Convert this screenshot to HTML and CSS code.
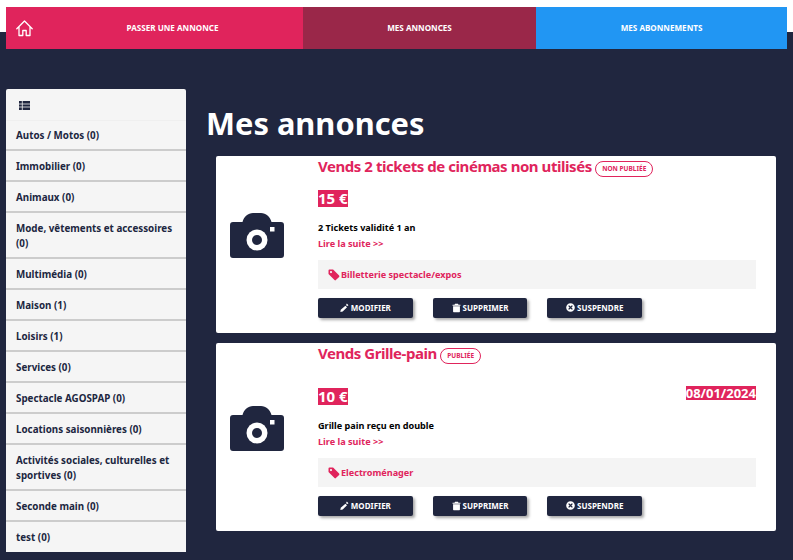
FILE: index.html
```html
<!DOCTYPE html>
<html lang="fr">
<head>
<meta charset="utf-8">
<title>Mes annonces</title>
<link rel="stylesheet" href="styles.css">
</head>
<body>
<svg class="defs" width="0" height="0" aria-hidden="true">
  <symbol id="i-tag" viewBox="0 0 12 12"><path d="M0.5 1.5a1 1 0 0 1 1-1h3.6l6 6a1 1 0 0 1 0 1.4l-3.2 3.2a1 1 0 0 1-1.4 0l-6-6zM3 2a1 1 0 1 0 0 2.2A1 1 0 0 0 3 2z" fill="currentColor" fill-rule="evenodd"/></symbol>
  <symbol id="i-pen" viewBox="0 0 10 10"><path d="M7.6 0.6l1.8 1.8-1 1-1.8-1zM6 3l1.8 1.8-4.8 4.7-2.6 0.4 0.4-2.4z" fill="currentColor"/></symbol>
  <symbol id="i-trash" viewBox="0 0 10 10"><path d="M3.4 0.4h3.2l0.6 1.1H9.4v1H0.6v-1h2.2zM1.2 3h7.6v6a0.7 0.7 0 0 1-0.7 0.7H1.9A0.7 0.7 0 0 1 1.2 9z" fill="currentColor"/></symbol>
  <symbol id="i-ban" viewBox="0 0 10 10"><path d="M5 0.2a4.8 4.8 0 1 1 0 9.6a4.8 4.8 0 0 1 0-9.6zM3.4 2.4L2.4 3.4 4 5 2.4 6.6l1 1L5 6l1.6 1.6 1-1L6 5l1.6-1.6-1-1L5 4z" fill="currentColor" fill-rule="evenodd"/></symbol>
  <symbol id="i-camera" viewBox="0 0 54 45"><path d="M3 9h9.5C14 3.500 18 0 23 0h8c5 0 9 3.500 10.500 9H51a3 3 0 0 1 3 3v30a3 3 0 0 1-3 3H3a3 3 0 0 1-3-3V12a3 3 0 0 1 3-3z" fill="currentColor"/><circle cx="27" cy="27" r="10.500" fill="#fff"/><circle cx="27" cy="27" r="5" fill="currentColor"/><rect x="40" y="14" width="4.500" height="4.500" fill="#fff"/></symbol>
</svg>

<header class="top">
  <nav class="tabs">
    <a class="tab tab-pink">
      <svg class="home" viewBox="0 0 17 17" width="17" height="17"><path d="M0.8 8.700L8.500 1l7.700 7.700M3 7v8.500h3.800v-5h3.400v5H14V7" fill="none" stroke="#fff" stroke-width="1.300" stroke-linejoin="round" stroke-linecap="round"/></svg>
      PASSER UNE ANNONCE
    </a>
    <a class="tab tab-rose">MES ANNONCES</a>
    <a class="tab tab-blue">MES ABONNEMENTS</a>
  </nav>
</header>

<div class="layout">
  <aside class="side">
    <div class="side-head">
      <svg viewBox="0 0 11 9" width="11" height="9"><path d="M0 0h11v9H0z" fill="#20263f"/><path d="M3.300 0v9M0 3h11M0 6h11" stroke="#f5f5f5" stroke-width="0.800"/></svg>
    </div>
    <ul class="cats">
      <li>Autos / Motos (0)</li>
      <li>Immobilier (0)</li>
      <li>Animaux (0)</li>
      <li>Mode, vêtements et accessoires (0)</li>
      <li>Multimédia (0)</li>
      <li>Maison (1)</li>
      <li>Loisirs (1)</li>
      <li>Services (0)</li>
      <li>Spectacle AGOSPAP (0)</li>
      <li>Locations saisonnières (0)</li>
      <li>Activités sociales, culturelles et sportives (0)</li>
      <li>Seconde main (0)</li>
      <li>test (0)</li>
    </ul>
  </aside>

  <main class="content">
    <h1 class="title">Mes annonces</h1>

    <article class="card">
      <div class="pic"><svg class="camera" width="54" height="45"><use href="#i-camera"/></svg></div>
      <div class="info">
        <h2 class="name">Vends 2 tickets de cinémas non utilisés <span class="state">NON PUBLIÉE</span></h2>
        <div class="row row-one"><span class="price">15 €</span></div>
        <p class="desc">2 Tickets validité 1 an</p>
        <a class="more">Lire la suite &gt;&gt;</a>
        <div class="cat"><svg width="12" height="12"><use href="#i-tag"/></svg>Billetterie spectacle/expos</div>
        <div class="btns">
          <a class="btn"><svg width="9" height="9"><use href="#i-pen"/></svg>MODIFIER</a>
          <a class="btn"><svg width="9" height="10"><use href="#i-trash"/></svg>SUPPRIMER</a>
          <a class="btn"><svg width="9" height="9"><use href="#i-ban"/></svg>SUSPENDRE</a>
        </div>
      </div>
    </article>

    <article class="card">
      <div class="pic"><svg class="camera" width="54" height="45"><use href="#i-camera"/></svg></div>
      <div class="info">
        <h2 class="name">Vends Grille-pain <span class="state">PUBLIÉE</span></h2>
        <div class="row row-two"><span class="price">10 €</span><span class="date">08/01/2024</span></div>
        <p class="desc">Grille pain reçu en double</p>
        <a class="more">Lire la suite &gt;&gt;</a>
        <div class="cat"><svg width="12" height="12"><use href="#i-tag"/></svg>Electroménager</div>
        <div class="btns">
          <a class="btn"><svg width="9" height="9"><use href="#i-pen"/></svg>MODIFIER</a>
          <a class="btn"><svg width="9" height="10"><use href="#i-trash"/></svg>SUPPRIMER</a>
          <a class="btn"><svg width="9" height="9"><use href="#i-ban"/></svg>SUSPENDRE</a>
        </div>
      </div>
    </article>
  </main>
</div>
</body>
</html>
```

FILE: styles.css
```css
* { box-sizing: border-box; }
html, body { margin: 0; height: 560px; overflow: hidden; }
body {
  background: #20263f;
  font-family: "Noto Sans", "Open Sans", sans-serif;
  font-weight: 700;
  color: #20263f;
}
.defs { position: absolute; }

.top {
  padding: 7px 6px 0;
  background: linear-gradient(#fff 32px, #20263f 32px);
}
.tabs { display: flex; height: 42px; }
.tab {
  position: relative;
  display: flex;
  align-items: center;
  justify-content: center;
  padding-bottom: 2px;
  color: #fff;
  font-size: 8.100px;
}
.tab-pink { width: 297px; padding-left: 36px; background: #e0245c; }
.tab-rose { width: 233px; background: #9a2749; }
.tab-blue { width: 251px; background: #2196f3; }
.home { position: absolute; left: 10px; top: 13px; }

.layout {
  display: flex;
  padding: 40px 0 0 6px;
}
.side {
  width: 180px;
  height: 463px;
  background: #f5f5f5;
  border-radius: 2px 2px 0 0;
  flex: none;
}
.side-head {
  height: 32px;
  padding: 12px 0 0 13px;
  border-bottom: 1px solid #efefef;
  line-height: 0;
}
.cats { list-style: none; margin: 0; padding: 0; }
.cats li {
  padding: 8px 10px 6px;
  font-size: 9.800px;
  line-height: 15px;
  border-bottom: 2px solid #ccc;
}
.cats li:first-child { padding-top: 7px; }
.cats li:last-child { border-bottom: 0; }

.content { padding: 0 0 0 20px; flex: 1; }
.title {
  margin: 14px 0 13px;
  color: #fff;
  font-size: 30.800px;
  line-height: 40px;
  font-weight: 700;
}
.card {
  display: flex;
  width: 560px;
  margin: 0 0 10px 10px;
  background: #fff;
  border-radius: 2px;
}
.pic {
  width: 102px;
  flex: none;
  display: flex;
  align-items: center;
  padding: 0 0 18px 14px;
}
.camera { color: #20263f; }
.info { flex: 1; padding: 0 20px 15px 0; }
.name {
  height: 21px;
  margin: 0;
  color: #e0245c;
  font-size: 15px;
  line-height: 20px;
  font-weight: 700;
  letter-spacing: -.45px;
  white-space: nowrap;
}
.state {
  display: inline-block;
  vertical-align: 1px;
  padding: 0 6px;
  border: 1px solid #e0245c;
  border-radius: 8px;
  font-size: 6.500px;
  line-height: 14px;
  letter-spacing: 0;
}
.row { display: flex; justify-content: space-between; align-items: flex-start; }
.row-one { margin-top: 13px; }
.row-two { margin-top: 24px; height: 24px; }
.price {
  background: #e0245c;
  color: #fff;
  font-size: 15px;
  line-height: 17px;
}
.date {
  margin-top: -2px;
  background: #e0245c;
  color: #fff;
  font-size: 13px;
  line-height: 14px;
}
.row-one + .desc { margin-top: 14px; }
.row-two + .desc { margin-top: 7px; }
.desc {
  margin: 0;
  color: #000;
  font-size: 9.100px;
  line-height: 14px;
}
.more {
  display: block;
  margin-top: 2px;
  color: #e0245c;
  font-size: 9.100px;
  line-height: 14px;
}
.cat {
  display: flex;
  align-items: center;
  gap: 1px;
  height: 29px;
  margin-top: 9px;
  padding-left: 10px;
  background: #f4f4f4;
  color: #e0245c;
  font-size: 9.100px;
}
.btns { display: flex; gap: 20px; margin-top: 9px; }
.btn {
  display: flex;
  align-items: center;
  justify-content: center;
  gap: 2px;
  width: 94.700px;
  height: 20px;
  padding-bottom: 1px;
  background: #20263f;
  color: #fff;
  border-radius: 2px;
  font-size: 8px;
  box-shadow: 2px 2px 3px rgba(0,0,0,.35);
}
```
